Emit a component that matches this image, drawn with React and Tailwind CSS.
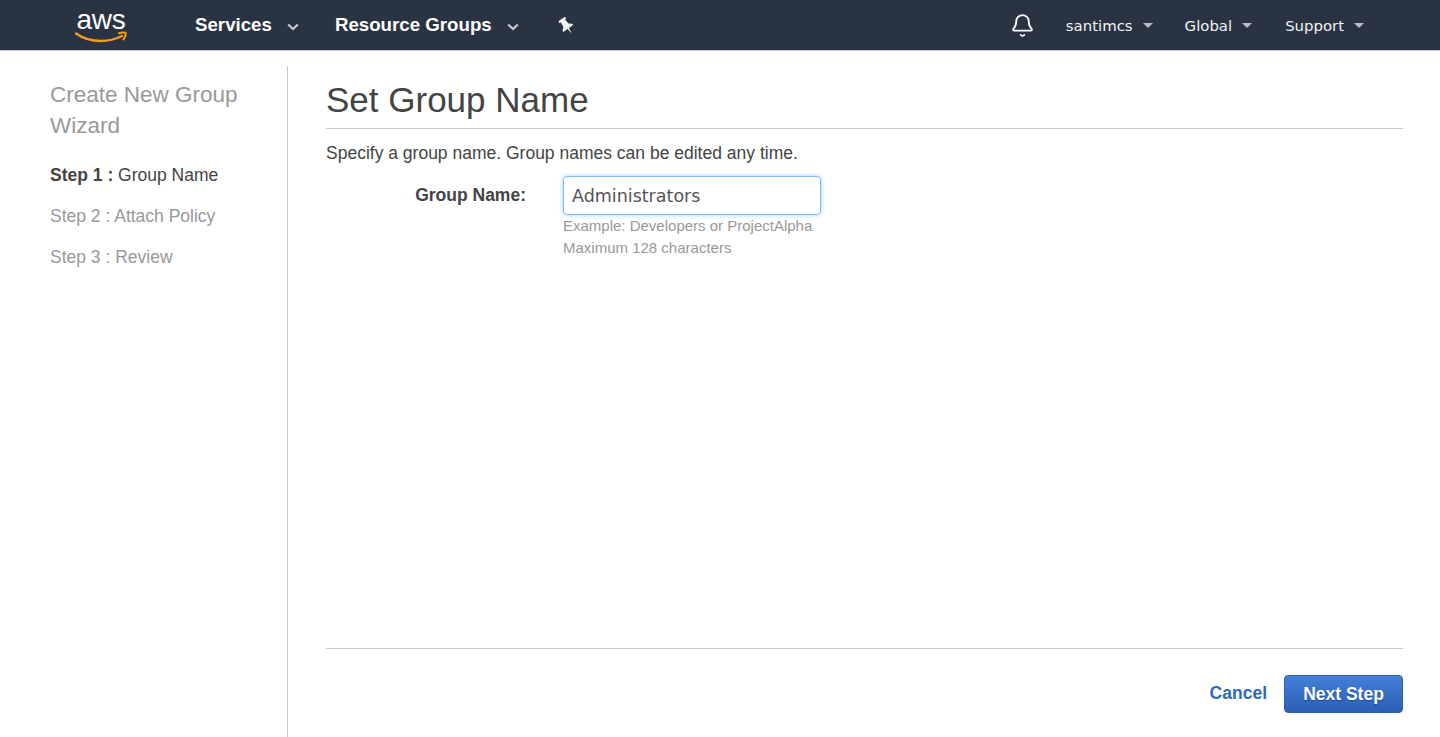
import { Bell } from "lucide-react";

const arial = "font-['Liberation_Sans',Arial,sans-serif]";
const verdana = "font-['DejaVu_Sans',Verdana,sans-serif]";

function AwsLogo() {
  return (
    <div className="w-[52px] h-[42px] flex flex-col items-center">
      <span className={`${arial} text-[28px] leading-[24px] mt-[4px] text-white tracking-[-0.3px]`}>aws</span>
      <svg width="52" height="12" viewBox="0 0 52 12" className="-mt-[1px]" fill="none">
        <path d="M1 2.5C8 7.5 17 10 26 10C33 10 40 8.5 47 5" stroke="#f79c1c" strokeWidth="2.3" strokeLinecap="round" />
        <path d="M44 2.2C46 1.6 49 1.4 50.5 1.8C51 3.5 50 6.5 48.5 8.5" stroke="#f79c1c" strokeWidth="2" strokeLinecap="round" />
      </svg>
    </div>
  );
}

function Pin() {
  return (
    <svg width="17" height="18" viewBox="0 0 17 18" fill="#f4f5f6">
      <path transform="rotate(-35 8.5 9)" d="M4.5 0.5H12.5V2.8H11L11.6 8L14.5 10.6V12H9.3L8.5 18.5L7.7 12H2.5V10.6L5.4 8L6 2.8H4.5Z" />
    </svg>
  );
}

function Chevron() {
  return (
    <svg width="12" height="8" viewBox="0 0 12 8" className="ml-[15px] mt-[5px]" fill="none">
      <path d="M1.2 1.5L6 6L10.8 1.5" stroke="#c5cbcc" strokeWidth="2.2" />
    </svg>
  );
}

function Caret() {
  return <span className="w-0 h-0 ml-[10px] border-x-[5px] border-x-transparent border-t-[5px] border-t-[#b8bebf]" />;
}

function NavMenu({ label, className }) {
  return (
    <div className={`flex items-center font-bold text-[18.7px] text-white ${arial} ${className}`}>
      {label}
      <Chevron />
    </div>
  );
}

function NavLink({ label, className }) {
  return (
    <div className={`flex items-center text-[14.9px] pt-[2px] text-[#f2f3f3] ${verdana} ${className}`}>
      {label}
      <Caret />
    </div>
  );
}

export default function App() {
  return (
    <div className={`h-[737px] overflow-hidden bg-white flex flex-col ${arial}`}>
      <header className="h-[51px] shrink-0 flex items-center bg-[#2a3342] border-b border-[#c9cbcb]">
        <div className="ml-[75px]"><AwsLogo /></div>
        <NavMenu label="Services" className="ml-[68px]" />
        <NavMenu label="Resource Groups" className="ml-[36px]" />
        <div className="ml-[39px] mt-[1px]"><Pin /></div>
        <Bell size={25} strokeWidth={1.7} className="ml-auto text-white" />
        <NavLink label="santimcs" className="ml-[31px]" />
        <NavLink label="Global" className="ml-[32px]" />
        <NavLink label="Support" className="ml-[33px] mr-[76px]" />
      </header>

      <main className="flex flex-1 pt-[15px] min-h-0">
        <aside className="w-[288px] shrink-0 border-r border-[#c9cbcb] pl-[50px] pt-[13px] pr-[30px]">
          <h2 className="text-[22.5px] leading-[31px] text-[#999] font-normal">Create New Group Wizard</h2>
          <ul className="mt-[15px] text-[17.5px] text-[#999]">
            <li className="h-[41px] leading-[38px] text-[#444]"><b>Step 1 :</b> Group Name</li>
            <li className="h-[41px] leading-[38px]">Step 2 : Attach Policy</li>
            <li className="h-[41px] leading-[38px]">Step 3 : Review</li>
          </ul>
        </aside>

        <section className="flex-1 flex flex-col pl-[38px] pr-[37px] min-w-0">
          <h1 className="text-[35px] leading-[42px] pt-[13px] h-[63px] text-[#444] font-normal border-b border-[#c9cbcb]">Set Group Name</h1>
          <p className="mt-[12px] text-[17.5px] leading-[24px] text-[#444]">Specify a group name. Group names can be edited any time.</p>
          <div className="flex mt-[11px]">
            <label className="w-[200px] text-right font-bold text-[17.5px] leading-[38px] text-[#444]">Group Name:</label>
            <div className="ml-[37px]">
              <div className={`w-[258px] h-[39px] rounded-[4px] border border-[#7dbcf4] shadow-[0_0_4px_#9accf8] px-[8px] text-[17.5px] leading-[39px] text-[#555] ${verdana}`}>Administrators</div>
              <p className="text-[15px] leading-[22px] text-[#999]">Example: Developers or ProjectAlpha</p>
              <p className="text-[15px] leading-[22px] text-[#999]">Maximum 128 characters</p>
            </div>
          </div>
          <div className="mt-auto h-[89px] border-t border-[#c9cbcb] flex items-start justify-end pt-[26px]">
            <a className="text-[17.5px] font-bold leading-[36px] text-[#2a6ab8] mr-[17px]">Cancel</a>
            <button className="w-[119px] h-[38px] rounded-[4px] border border-[#2c5fae] bg-gradient-to-b from-[#447fd8] to-[#2a5fb4] text-white font-bold text-[17.5px] [text-shadow:0_1px_1px_#1d4788]">Next Step</button>
          </div>
        </section>
      </main>
    </div>
  );
}
